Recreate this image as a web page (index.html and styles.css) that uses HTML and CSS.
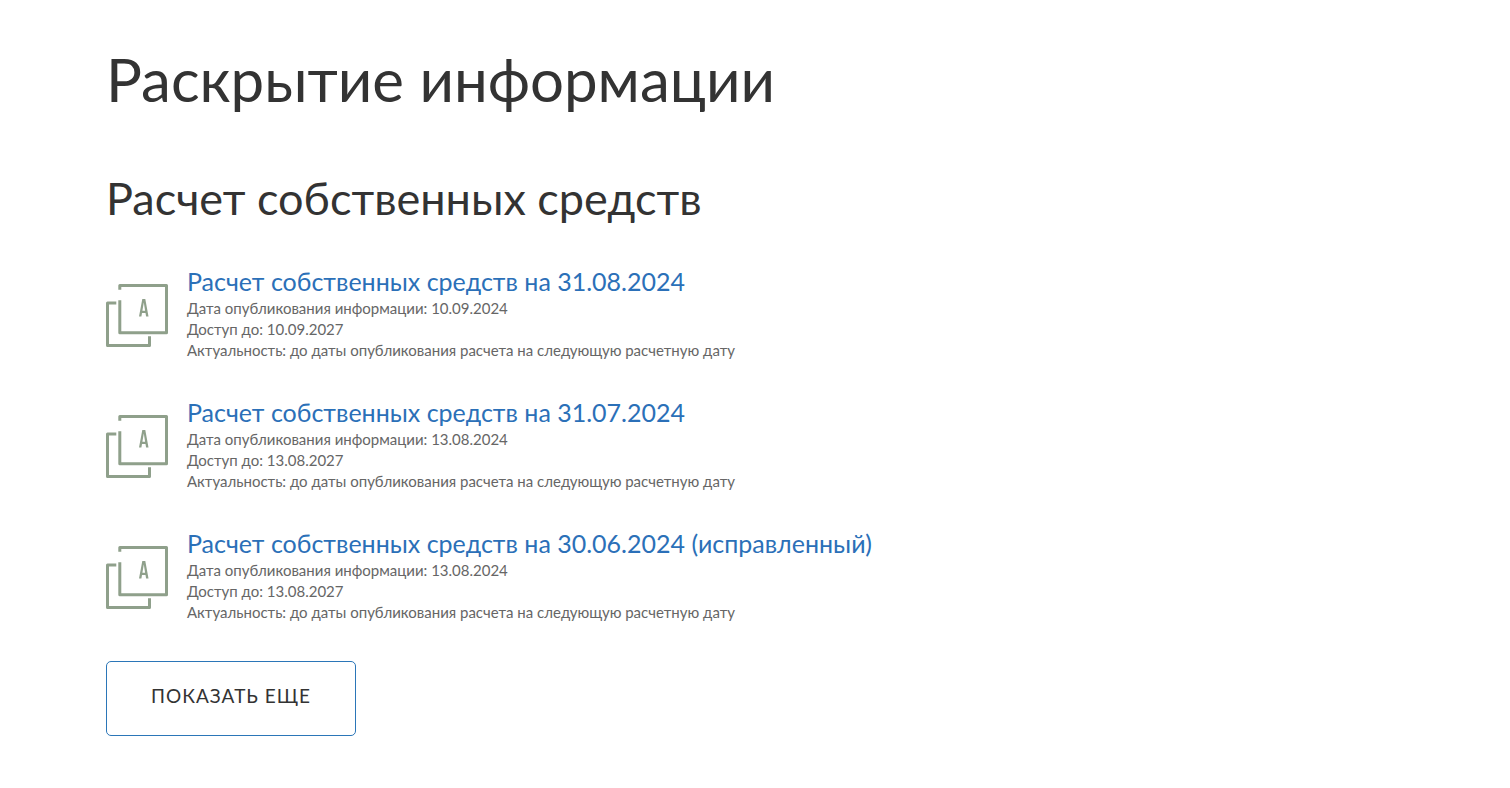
FILE: index.html
```html
<!DOCTYPE html>
<html lang="ru">
<head>
<meta charset="utf-8">
<title>Раскрытие информации</title>
<link rel="stylesheet" href="styles.css">
</head>
<body>
<svg class="sprite" aria-hidden="true">
  <symbol id="doc" viewBox="0 0 62 63">
    <g fill="none" stroke="currentColor" stroke-width="3" stroke-linejoin="round">
      <path d="M13.800 5.700V1.500H60.500V48.800H13.800V16.200"/>
      <path d="M10.300 19H1.500V61.500H43.500V52.300"/>
    </g>
    <path fill="currentColor" fill-rule="evenodd" d="M36.300 15H39.300L42.500 32.500H40.100L39.500 29H36L35.400 32.500H33L36.300 15ZM37.800 18.500L36.400 26.800H39.100Z"/>
  </symbol>
</svg>
<main class="page">
  <h1 class="title">Раскрытие информации</h1>
  <section>
    <h2 class="subtitle">Расчет собственных средств</h2>
    <ul class="docs">
      <li class="doc">
        <svg class="doc-icon" aria-hidden="true"><use href="#doc"/></svg>
        <div class="doc-body">
          <a class="doc-link" href="#">Расчет собственных средств на 31.08.2024</a>
          <p class="doc-meta">Дата опубликования информации: 10.09.2024</p>
          <p class="doc-meta">Доступ до: 10.09.2027</p>
          <p class="doc-meta">Актуальность: до даты опубликования расчета на следующую расчетную дату</p>
        </div>
      </li>
      <li class="doc">
        <svg class="doc-icon" aria-hidden="true"><use href="#doc"/></svg>
        <div class="doc-body">
          <a class="doc-link" href="#">Расчет собственных средств на 31.07.2024</a>
          <p class="doc-meta">Дата опубликования информации: 13.08.2024</p>
          <p class="doc-meta">Доступ до: 13.08.2027</p>
          <p class="doc-meta">Актуальность: до даты опубликования расчета на следующую расчетную дату</p>
        </div>
      </li>
      <li class="doc">
        <svg class="doc-icon" aria-hidden="true"><use href="#doc"/></svg>
        <div class="doc-body">
          <a class="doc-link" href="#">Расчет собственных средств на 30.06.2024 (исправленный)</a>
          <p class="doc-meta">Дата опубликования информации: 13.08.2024</p>
          <p class="doc-meta">Доступ до: 13.08.2027</p>
          <p class="doc-meta">Актуальность: до даты опубликования расчета на следующую расчетную дату</p>
        </div>
      </li>
    </ul>
    <button class="more" type="button">Показать еще</button>
  </section>
</main>
</body>
</html>
```
FILE: styles.css
```css
body {
  margin: 0;
  background: #fff;
  color: #333;
  font-family: Lato, "Open Sans", sans-serif;
}
.sprite {
  display: none;
}
.page {
  padding: 43px 106px 52px;
}
.title {
  margin: 0 0 49px;
  font-size: 60px;
  line-height: 72px;
  font-weight: 400;
}
.subtitle {
  margin: 0 0 35px;
  font-size: 45px;
  line-height: 68px;
  font-weight: 400;
}
.docs {
  display: grid;
  gap: 37px;
  margin: 0 0 38px;
  padding: 0;
  list-style: none;
}
.doc {
  display: flex;
  align-items: flex-start;
  gap: 19px;
}
.doc-icon {
  flex: none;
  width: 62px;
  height: 63px;
  margin-top: 17px;
  color: #8fa08b;
}
.doc-link {
  display: block;
  margin-bottom: 2px;
  color: #2b70b8;
  font-size: 25px;
  line-height: 29px;
  text-decoration: none;
}
.doc-meta {
  margin: 0;
  color: #666;
  font-size: 15px;
  line-height: 21px;
}
.more {
  padding: 22px 44px 28px;
  border: 1px solid #2b76b8;
  border-radius: 5px;
  background: #fff;
  color: #333;
  font-family: inherit;
  font-size: 19px;
  line-height: 23px;
  letter-spacing: 1px;
  text-transform: uppercase;
}
```
